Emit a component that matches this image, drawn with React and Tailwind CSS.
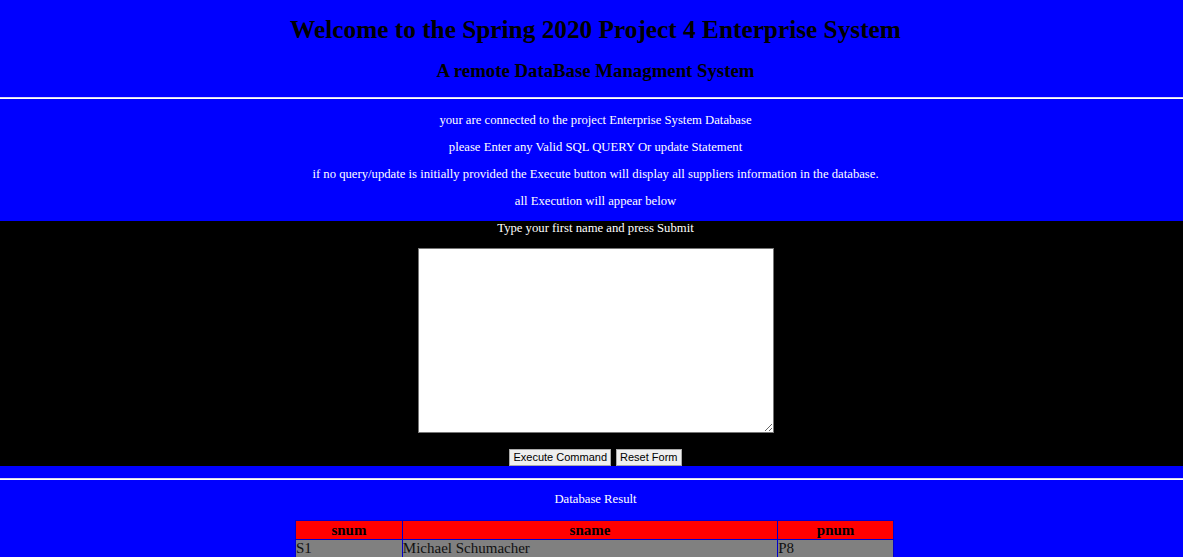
import React, { useState } from "react";

const rows = [
  { snum: "S1", sname: "Michael Schumacher", pnum: "P8" },
  { snum: "S2", sname: "Lewis Hamilton", pnum: "P3" },
];

const App = () => {
  const [query, setQuery] = useState("");

  return (
    <div className="min-h-screen bg-[#0000ff] font-['Liberation_Serif',serif] text-black">
      {/* header */}
      <div className="flex flex-col items-center pt-[13px] pl-[8px]">
        <h1 className="text-[25.3px] leading-[32px] font-bold">
          Welcome to the Spring 2020 Project 4 Enterprise System
        </h1>
        <h2 className="mt-[15px] text-[18.8px] leading-[22px] font-bold">
          A remote DataBase Managment System
        </h2>
      </div>
      <hr className="mt-[15px] border-0 border-t-[1px] border-b-[1px] border-t-[#d8d8f0] border-b-white h-[2px]" />

      <div className="flex flex-col items-center gap-[11px] pt-[13px] pb-[12px] pl-[8px] text-[12.7px] leading-[16px] text-white">
        <p>your are connected to the project Enterprise System Database</p>
        <p>please Enter any Valid SQL QUERY Or update Statement</p>
        <p>
          if no query/update is initially provided the Execute button will display all suppliers information in the
          database.
        </p>
        <p>all Execution will appear below</p>
      </div>

      {/* form */}
      <div className="bg-black flex flex-col items-center h-[245px] pl-[8px]">
        <p className="text-[12.7px] leading-[15px] text-white">Type your first name and press Submit</p>
        <textarea
          value={query}
          onChange={(e) => setQuery(e.target.value)}
          className="mt-[12px] w-[356px] h-[185px] bg-white border border-[#767676] block"
        />
        <div className="mt-[16px] flex gap-[5px] font-['Liberation_Sans',sans-serif] text-[11px] leading-[13px] text-black">
          <button className="bg-[#efefef] border border-[#aaaaaa] px-[3px] h-[17px]">Execute Command</button>
          <button className="bg-[#efefef] border border-[#aaaaaa] px-[3px] h-[17px]">Reset Form</button>
        </div>
      </div>

      <hr className="mt-[12px] border-0 border-t-[1px] border-b-[1px] border-t-[#d8d8f0] border-b-white h-[2px]" />

      <p className="mt-[12px] pl-[8px] text-center text-[12.7px] leading-[15px] text-white">Database Result</p>

      <div className="flex justify-center mt-[13px] pl-[6px]">
        <table className="w-[599px] border-collapse text-[15px] leading-[17px]">
          <thead>
            <tr className="bg-[#ff0000]">
              <th className="w-[107px] border border-[#0000cc] font-bold h-[19px]">snum</th>
              <th className="w-[376px] border border-[#0000cc] font-bold">sname</th>
              <th className="w-[116px] border border-[#0000cc] font-bold">pnum</th>
            </tr>
          </thead>
          <tbody>
            {rows.map((r) => (
              <tr key={r.snum} className="bg-[#808080] text-[#111]">
                <td className="border border-[#0000cc] h-[18px]">{r.snum}</td>
                <td className="border border-[#0000cc]">{r.sname}</td>
                <td className="border border-[#0000cc]">{r.pnum}</td>
              </tr>
            ))}
          </tbody>
        </table>
      </div>
    </div>
  );
};

export default App;
